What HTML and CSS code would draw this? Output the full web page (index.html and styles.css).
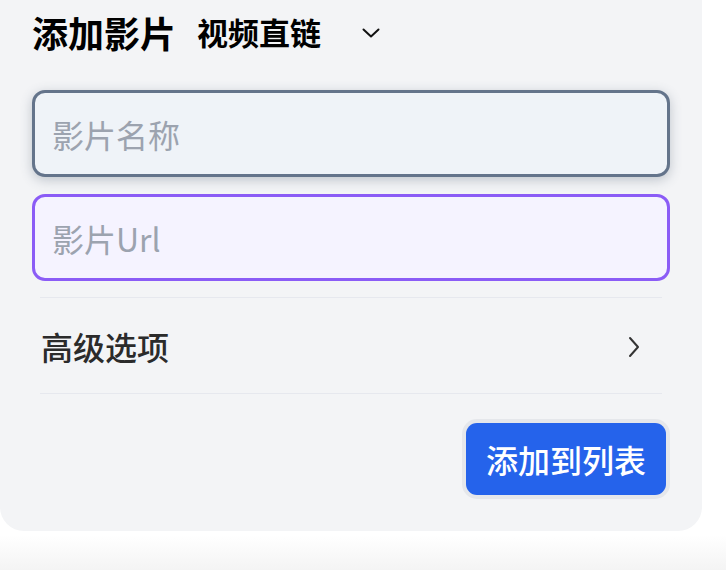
FILE: index.html
```html
<!DOCTYPE html>
<html lang="zh">
<head>
<meta charset="utf-8">
<title>添加影片</title>
<link rel="stylesheet" href="styles.css">
</head>
<body>
<div class="card">
  <div class="head">
    <h1 class="title">添加影片</h1>
    <div class="select">
      <span class="select-text">视频直链</span>
      <svg class="select-arrow" width="18" height="10" viewBox="0 0 18 10"><polyline points="1.5,1.5 9,8.5 16.5,1.5" fill="none" stroke="#111" stroke-width="2" stroke-linecap="round" stroke-linejoin="round"/></svg>
    </div>
  </div>
  <input class="field field-name" type="text" placeholder="影片名称">
  <input class="field field-url" type="text" placeholder="影片Url">
  <div class="advanced">
    <span class="advanced-label">高级选项</span>
    <svg class="advanced-arrow" width="12" height="22" viewBox="0 0 12 22"><polyline points="2,2 10,11 2,20" fill="none" stroke="#333" stroke-width="2" stroke-linecap="round" stroke-linejoin="round"/></svg>
  </div>
  <div class="actions">
    <button class="submit" type="button">添加到列表</button>
  </div>
</div>
</body>
</html>
```

FILE: styles.css
```css
html, body {
  height: 100%;
}
body {
  margin: 0;
  background: linear-gradient(to bottom, #ffffff 0, #ffffff 535px, #f4f4f4 570px);
  font-family: "Noto Sans CJK SC", "Noto Sans", sans-serif;
  overflow: hidden;
}
.card {
  width: 702px;
  box-sizing: border-box;
  background: #f3f4f6;
  border-radius: 0 0 24px 24px;
  padding: 11px 32px 36px;
  display: flex;
  flex-direction: column;
}
.head {
  display: flex;
  align-items: center;
  height: 42px;
  margin-bottom: 37px;
}
.title {
  margin: 0;
  font-size: 36px;
  line-height: 42px;
  font-weight: 700;
  color: #000;
}
.select {
  display: flex;
  align-items: center;
  margin-left: 21px;
}
.select-text {
  font-size: 31px;
  line-height: 42px;
  font-weight: 700;
  color: #000;
}
.select-arrow {
  margin-left: 41px;
  margin-top: 2px;
}
.field {
  display: block;
  box-sizing: border-box;
  width: 638px;
  height: 87px;
  border-radius: 13px;
  border: 3px solid;
  padding: 0 17px;
  font-family: "Noto Sans CJK SC", "Noto Sans", sans-serif;
  font-size: 32px;
  color: #111;
  outline: none;
}
.field::placeholder {
  color: #9ca3af;
}
.field-name {
  border-color: #64748b;
  background: #eff3f8;
  box-shadow: 0 3px 12px rgba(71, 85, 105, 0.3);
  margin-bottom: 17px;
}
.field-url {
  border-color: #8b5cf6;
  background: #f5f3ff;
  margin-bottom: 16px;
}
.advanced {
  margin: 0 8px;
  border-top: 1px solid #e6e8ee;
  border-bottom: 1px solid #e6e8ee;
  height: 97px;
  box-sizing: border-box;
  display: flex;
  align-items: center;
  justify-content: space-between;
  padding: 0 22px 0 1px;
}
.advanced-label {
  font-size: 32px;
  color: #2b2b2b;
  font-weight: 500;
}
.advanced-arrow {
  margin-top: 2px;
}
.actions {
  display: flex;
  justify-content: flex-end;
  margin-top: 29px;
  padding-right: 4px;
}
.submit {
  width: 200px;
  height: 72px;
  border: none;
  border-radius: 11px;
  background: #2563eb;
  color: #fff;
  font-family: "Noto Sans CJK SC", "Noto Sans", sans-serif;
  font-size: 32px;
  font-weight: 500;
  box-shadow: 0 0 0 4px #e5e7eb;
  padding: 0;
}
```
